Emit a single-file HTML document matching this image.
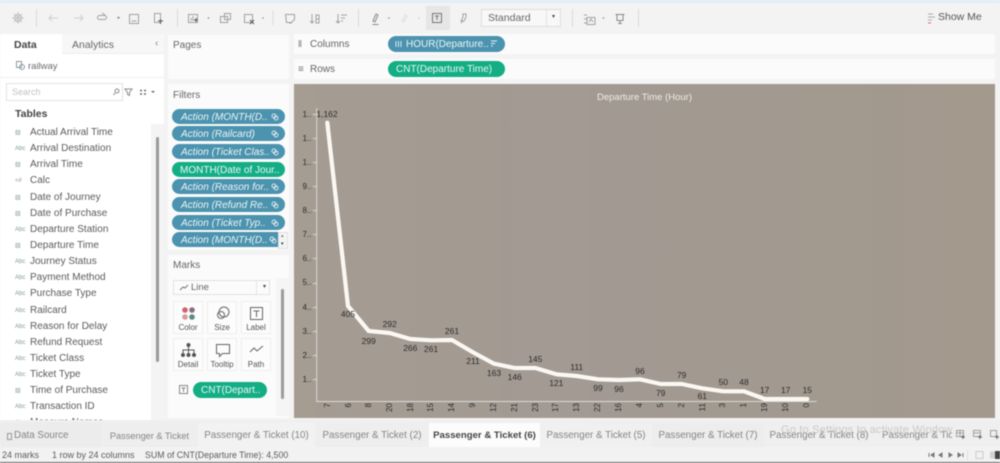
<!DOCTYPE html>
<html><head><meta charset="utf-8">
<style>
html,body{margin:0;padding:0;width:1000px;height:463px;overflow:hidden;background:#f3f3f3;font-family:"Liberation Sans",sans-serif;color:#555}
#w{position:relative;width:1000px;height:463px;overflow:hidden;filter:blur(.45px)}
.a{position:absolute;white-space:nowrap}
.p{position:absolute;background:#fbfbfb}
.pill{position:absolute;height:15px;line-height:17px;border-radius:8px;color:#eef5f8;font-size:10px;white-space:nowrap;overflow:hidden;background:#4b93ae;padding-left:9px;box-sizing:border-box}
.g{background:#13ae84}
.pill svg{position:absolute;right:6px;top:4px}
.f{position:absolute;left:30px;font-size:10px;color:#5b5b5b;white-space:nowrap;height:14px;line-height:16px}
.fi{position:absolute;left:15px;font-size:6px;color:#7f979f;line-height:16px;height:14px}
.t{position:absolute;top:423px;height:24px;line-height:26px;font-size:9.8px;color:#858585;white-space:nowrap;text-align:center;box-sizing:border-box}
.m{position:absolute;width:30px;height:33px;background:#fcfcfc;border:1px solid #eee;box-sizing:border-box;font-size:8px;color:#555;text-align:center;padding-top:21px}
.m svg{position:absolute;left:6px;top:3px}
svg.tb{position:absolute;left:0;top:0}
</style></head><body><div id="w">
<div class="a" style="left:0;top:0;width:1000px;height:3px;background:#e2eef7"></div>

<svg class="tb" width="1000" height="34" fill="none" stroke="#a2a2a2" stroke-width="1">
<g stroke="#dadada"><path d="M36.500 9V27M177.500 9V27M358.500 9V27M572.500 9V27M638.500 9V27M273 11V25"/></g>
<circle cx="18" cy="18" r="3.500" stroke="#b8aeae"/><path d="M18 12v12M12 18h12M14 14l8 8M22 14l-8 8" stroke="#cbc5c5"/>
<path d="M58 18H49M52 15l-3 3 3 3M74 18h9M80 15l3 3-3 3" stroke="#cfcfcf"/>
<rect x="97.500" y="15.500" width="9" height="4" rx="2"/><path d="M102 13l3 2" />
<path d="M117 17l1.500 2 1.500-2" fill="#777" stroke="none"/>
<rect x="129.500" y="14.500" width="9" height="9"/><path d="M131.500 21h5"/>
<rect x="154.500" y="13.500" width="6" height="9"/><path d="M158 21h5M160.500 19v5" stroke="#555"/>
<rect x="188.500" y="14.500" width="9" height="8"/><path d="M191 21v-3M193 21v-5" /><path d="M194 20h4M196 18v4" stroke="#555"/>
<path d="M207.500 17.500l1 1.500 1-1.500" fill="#777" stroke="none"/>
<rect x="220.500" y="16.500" width="7" height="6"/><rect x="224.500" y="13.500" width="6" height="6"/>
<rect x="244.500" y="14.500" width="8" height="8"/><path d="M250 20l4 4M254 20l-4 4" stroke="#555"/>
<path d="M262 17.500l1 1.500 1-1.500" fill="#777" stroke="none"/>
<path d="M285.500 14.500h9v5l-3 3h-5z"/><path d="M289 23h3"/>
<path d="M312 14v9M310 21l2 2 2-2M316 15h3v8h-3zM316 19h3"/>
<path d="M338 14v9M336 21l2 2 2-2M341 15h6M341 18h4M341 21h2"/>
<path d="M373 21l3-7 2 1-3 7zM372.500 24.500h6" stroke="#8a8a8a"/>
<path d="M388 17.500l1 1.500 1-1.500" fill="#777" stroke="none"/>
<path d="M402 21l3-6 2 1-3 6z" stroke="#dedede"/>
<path d="M418 17.500l1 1.500 1-1.500" fill="#bbb" stroke="none"/>
<path d="M461 21l2-4v-3h3v3l-2 4zM461 23l2-2"/>
<path d="M587 17.500h8v7h-8zM584 15h3M584 19h3M584 23h3M589 22l2-3 2 3"/>
<path d="M602.500 17.500l1 1.500 1-1.500" fill="#777" stroke="none"/>
<path d="M615.500 14.500h9M617 14.500v6h6v-6M620 20.500v3M618 23.500h4" stroke="#8a8a8a"/>
<path d="M928 14h5M928 17h7M928 20h4" stroke="#aaa"/><path d="M928 23h3" stroke="#e06080"/>
</svg>
<div class="a" style="left:426px;top:6px;width:24px;height:24px;background:#e6e6e6"></div>
<svg class="a" style="left:431px;top:11px" width="14" height="14" fill="none" stroke="#777"><rect x="1.500" y="2.500" width="9" height="9"/><path d="M4 5h4M6 5v4"/></svg>
<div class="a" style="left:481px;top:9px;width:80px;height:18px;background:#f8f8f8;border:1px solid #ddd;box-sizing:border-box;font-size:10.500px;line-height:17px;padding-left:6px;color:#666">Standard<span style="position:absolute;right:5px;top:-1px;font-size:6px;color:#444">▾</span><span style="position:absolute;right:13px;top:0;height:16px;width:1px;background:#e2e2e2"></span></div>
<div class="a" style="left:938px;top:11px;font-size:10.500px;color:#555">Show Me</div>

<!-- Data pane -->
<div class="p" style="left:0;top:34px;width:164px;height:389px;background:#fff"></div>
<div class="a" style="left:62px;top:34px;width:102px;height:20px;background:#f7f7f7;border-bottom:1px solid #eee;box-sizing:border-box"></div>
<div class="a" style="left:14px;top:39px;font-size:10.500px;font-weight:bold;color:#444">Data</div>
<div class="a" style="left:72px;top:39px;font-size:10.500px;color:#666">Analytics</div>
<div class="a" style="left:155px;top:38px;font-size:10px;color:#888">‹</div>
<svg class="a" style="left:15px;top:60px" width="11" height="11" fill="none" stroke="#8a9aa0"><rect x="1.500" y="1.500" width="5" height="6"/><circle cx="7" cy="7" r="2.500"/></svg>
<div class="a" style="left:28px;top:61px;font-size:9.500px;color:#6b6b6b">railway</div>
<div class="a" style="left:0;top:77px;width:164px;height:1px;background:#efefef"></div>
<div class="a" style="left:6px;top:83px;width:117px;height:18px;background:#fff;border:1px solid #e2e2e2;box-sizing:border-box;font-size:9px;line-height:16px;padding-left:5px;color:#c2c2c2">Search</div>
<svg class="a" style="left:112px;top:86px" width="50" height="12" fill="none" stroke="#8b8b8b"><circle cx="5" cy="5" r="2"/><path d="M3 7L1.500 9"/><path d="M13 3h7l-2.500 3.500v3l-2-1v-2z"/><path d="M28 4.500h2M32 4.500h2M28 8h2M32 8h2" stroke="#666" stroke-width="1.500"/><path d="M39 5l2 2 2-2" fill="#666" stroke="none"/></svg>
<div class="a" style="left:15px;top:108px;font-size:10.500px;font-weight:bold;color:#444">Tables</div>
<div class="a" style="left:151px;top:124px;width:13px;height:299px;background:#f4f4f4"></div>
<div class="a" style="left:156px;top:137px;width:3px;height:225px;background:#9a9a9a;border-radius:2px"></div>

<div class="fi" style="top:125px">▤</div><div class="f" style="top:125px">Actual Arrival Time</div>
<div class="fi" style="top:141px">Abc</div><div class="f" style="top:141px">Arrival Destination</div>
<div class="fi" style="top:157px">▤</div><div class="f" style="top:157px">Arrival Time</div>
<div class="fi" style="top:173px">=#</div><div class="f" style="top:173px">Calc</div>
<div class="fi" style="top:190px">▤</div><div class="f" style="top:190px">Date of Journey</div>
<div class="fi" style="top:206px">▤</div><div class="f" style="top:206px">Date of Purchase</div>
<div class="fi" style="top:222px">Abc</div><div class="f" style="top:222px">Departure Station</div>
<div class="fi" style="top:238px">▤</div><div class="f" style="top:238px">Departure Time</div>
<div class="fi" style="top:254px">Abc</div><div class="f" style="top:254px">Journey Status</div>
<div class="fi" style="top:270px">Abc</div><div class="f" style="top:270px">Payment Method</div>
<div class="fi" style="top:286px">Abc</div><div class="f" style="top:286px">Purchase Type</div>
<div class="fi" style="top:303px">Abc</div><div class="f" style="top:303px">Railcard</div>
<div class="fi" style="top:319px">Abc</div><div class="f" style="top:319px">Reason for Delay</div>
<div class="fi" style="top:335px">Abc</div><div class="f" style="top:335px">Refund Request</div>
<div class="fi" style="top:351px">Abc</div><div class="f" style="top:351px">Ticket Class</div>
<div class="fi" style="top:367px">Abc</div><div class="f" style="top:367px">Ticket Type</div>
<div class="fi" style="top:383px">▤</div><div class="f" style="top:383px">Time of Purchase</div>
<div class="fi" style="top:399px">Abc</div><div class="f" style="top:399px">Transaction ID</div>
<div class="fi" style="top:415px">Abc</div><div class="f" style="top:415px">Measure Names</div>

<!-- Pages -->
<div class="p" style="left:168px;top:35px;width:121px;height:44px"></div>
<div class="a" style="left:173px;top:40px;font-size:10px;color:#666">Pages</div>

<!-- Filters -->
<div class="p" style="left:168px;top:84px;width:121px;height:166px"></div>
<div class="a" style="left:173px;top:90px;font-size:10px;color:#666">Filters</div>
<div class="pill" style="left:172px;top:109px;width:113px"><i>Action (MONTH(D..</i><svg width="8" height="8" fill="none" stroke="#dbe9ef"><circle cx="3" cy="3" r="2"/><circle cx="5" cy="5" r="2"/></svg></div>
<div class="pill" style="left:172px;top:126px;width:113px"><i>Action (Railcard)</i><svg width="8" height="8" fill="none" stroke="#dbe9ef"><circle cx="3" cy="3" r="2"/><circle cx="5" cy="5" r="2"/></svg></div>
<div class="pill" style="left:172px;top:144px;width:113px"><i>Action (Ticket Clas..</i><svg width="8" height="8" fill="none" stroke="#dbe9ef"><circle cx="3" cy="3" r="2"/><circle cx="5" cy="5" r="2"/></svg></div>
<div class="pill g" style="left:172px;top:162px;width:113px;padding-left:8px">MONTH(Date of Jour..</div>
<div class="pill" style="left:172px;top:179px;width:113px"><i>Action (Reason for..</i><svg width="8" height="8" fill="none" stroke="#dbe9ef"><circle cx="3" cy="3" r="2"/><circle cx="5" cy="5" r="2"/></svg></div>
<div class="pill" style="left:172px;top:197px;width:113px"><i>Action (Refund Re..</i><svg width="8" height="8" fill="none" stroke="#dbe9ef"><circle cx="3" cy="3" r="2"/><circle cx="5" cy="5" r="2"/></svg></div>
<div class="pill" style="left:172px;top:215px;width:113px"><i>Action (Ticket Typ..</i><svg width="8" height="8" fill="none" stroke="#dbe9ef"><circle cx="3" cy="3" r="2"/><circle cx="5" cy="5" r="2"/></svg></div>
<div class="pill" style="left:172px;top:232px;width:106px;border-radius:8px 0 0 8px"><i>Action (MONTH(D..</i><svg style="right:1px" width="8" height="8" fill="none" stroke="#dbe9ef"><circle cx="3" cy="3" r="2"/><circle cx="5" cy="5" r="2"/></svg></div>
<div class="a" style="left:278px;top:232px;width:10px;height:17px;background:#f4f4f4;border:1px solid #e0e0e0;box-sizing:border-box"></div>
<div class="a" style="left:281px;top:233px;font-size:5px;color:#777">▴</div>
<div class="a" style="left:281px;top:241px;font-size:5px;color:#333">▾</div>

<!-- Marks -->
<div class="p" style="left:168px;top:255px;width:121px;height:163px"></div>
<div class="a" style="left:173px;top:260px;font-size:10px;color:#666">Marks</div>
<div class="a" style="left:173px;top:280px;width:97px;height:15px;background:#fbfbfb;border:1px solid #e2e2e2;box-sizing:border-box;font-size:9.500px;line-height:13px;padding-left:17px;color:#666">Line<span style="position:absolute;right:3px;top:0;font-size:6px;color:#444">▾</span><span style="position:absolute;right:12px;top:0;width:1px;height:13px;background:#e6e6e6"></span></div>
<svg class="a" style="left:179px;top:284px" width="10" height="8" fill="none" stroke="#777"><path d="M1 6l3-3 2 1 3-3"/></svg>
<div class="a" style="left:276px;top:278px;width:13px;height:138px;background:#f5f5f5"></div>
<div class="a" style="left:281px;top:289px;width:3px;height:110px;background:#9c9c9c;border-radius:2px"></div>

<div class="m" style="left:173px;top:301px">Color<svg width="18" height="18"><circle cx="5" cy="5" r="2.800" fill="#c9666d"/><circle cx="12" cy="5" r="2.800" fill="#8a6e80"/><circle cx="5" cy="12" r="2.800" fill="#d99a9a"/><circle cx="12" cy="12" r="2.800" fill="#5f8a84"/></svg></div>
<div class="m" style="left:207px;top:301px">Size<svg width="18" height="18" fill="none" stroke="#666"><circle cx="10" cy="7" r="5"/><circle cx="7" cy="10" r="3.500"/></svg></div>
<div class="m" style="left:241px;top:301px">Label<svg width="18" height="18" fill="none" stroke="#666"><rect x="2.500" y="2.500" width="12" height="12"/><path d="M5.500 6h6M8.500 6v6"/></svg></div>
<div class="m" style="left:173px;top:338px">Detail<svg width="18" height="18" fill="none" stroke="#555"><circle cx="8.500" cy="3" r="1.500" fill="#555"/><path d="M8.500 4v7M3 11V8h11v3"/><circle cx="3" cy="13" r="1.500" fill="#555"/><circle cx="8.500" cy="13" r="1.500" fill="#555"/><circle cx="14" cy="13" r="1.500" fill="#555"/></svg></div>
<div class="m" style="left:207px;top:338px">Tooltip<svg width="18" height="18" fill="none" stroke="#666"><path d="M2.500 2.500h13v9h-7l-3 3v-3h-3z"/></svg></div>
<div class="m" style="left:241px;top:338px">Path<svg width="18" height="18" fill="none" stroke="#666"><path d="M2 10l4-4 3 3 6-5"/></svg></div>
<svg class="a" style="left:179px;top:385px" width="10" height="10" fill="none" stroke="#888"><rect x=".5" y=".5" width="8" height="8"/><path d="M2.500 3h4M4.500 3v4"/></svg>
<div class="pill g" style="left:193px;top:382px;width:74px;height:16px;line-height:17px;font-size:10px;padding-left:8px">CNT(Depart..</div>

<!-- Shelves -->
<div class="p" style="left:294px;top:34px;width:701px;height:20px"></div>
<div class="p" style="left:294px;top:59px;width:701px;height:20px"></div>
<div class="a" style="left:298px;top:39px;font-size:9px;color:#777">⦀</div>
<div class="a" style="left:310px;top:39px;font-size:10px;color:#666">Columns</div>
<div class="a" style="left:298px;top:64px;font-size:10px;color:#777">≡</div>
<div class="a" style="left:310px;top:64px;font-size:10px;color:#666">Rows</div>
<div class="pill" style="left:388px;top:36px;width:117px;height:16px;line-height:17px;font-size:10px;padding-left:18px">HOUR(Departure..</div>
<svg class="a" style="left:395px;top:41px" width="8" height="7" fill="none" stroke="#dbe9ef"><path d="M1 0v6M3.500 0v6M6 0v6"/></svg>
<svg class="a" style="left:490px;top:40px" width="9" height="8" fill="none" stroke="#e5eff3"><path d="M1 1h6M1 3.500h4M1 6h2"/></svg>
<div class="pill g" style="left:388px;top:61px;width:117px;height:16px;line-height:17px;font-size:10px;padding-left:8px">CNT(Departure Time)</div>

<!-- Chart -->
<div class="a" style="left:294px;top:84px;width:701px;height:334px;background:#a39a8f"></div>
<svg class="a" style="left:0;top:0" width="1000" height="463" font-family="Liberation Sans, sans-serif" font-size="8.500" fill="#2c2c2c">
<linearGradient id="bg" x1="0" x2="1" y1="0" y2="0"><stop offset="0" stop-color="#a59c92"/><stop offset=".4" stop-color="#a29a93"/><stop offset="1" stop-color="#a3998d"/></linearGradient>
<rect x="294" y="84" width="701" height="334" fill="url(#bg)"/>
<text x="644.500" y="100" text-anchor="middle" fill="#efebe5" font-size="9.500">Departure Time (Hour)</text>
<path d="M316.700 108V401.500H816.700" fill="none" stroke="#dcd9d3" stroke-width="1"/>
<path d="M313 114.500h3.500M313 138.500h3.500M313 162.500h3.500M313 186.500h3.500M313 210.500h3.500M313 234.500h3.500M313 258.500h3.500M313 283.500h3.500M313 307.500h3.500M313 331.500h3.500M313 355.500h3.500M313 379.500h3.500" stroke="#dcd9d3" fill="none"/>
<g font-size="8" text-anchor="middle">
<text x="307" y="117">1..</text><text x="307" y="141">1..</text><text x="307" y="165">1..</text><text x="307" y="189">9..</text><text x="307" y="213">8..</text><text x="307" y="237">7..</text><text x="307" y="261">6..</text><text x="307" y="285">5..</text><text x="307" y="310">4..</text><text x="307" y="334">3..</text><text x="307" y="358">2..</text><text x="307" y="382">1..</text>
</g>
<polyline fill="none" stroke="#fbf8f3" stroke-width="4.200" stroke-linejoin="round" stroke-linecap="round" points="327.300,122.700 348,306 368.700,331 389.700,333 410.300,339 431,340.300 452,340 473,352.300 494,363.700 514.700,368 535.300,368 556.300,374.300 576.700,376 598,379.300 619,380 640,379.300 660.700,384 681.700,384 702.300,388.300 723.300,391.300 744,391.300 764.700,399 785.700,399 807.300,399"/>
<g text-anchor="middle">
<text x="327" y="117">1,162</text><text x="348" y="317">405</text><text x="368.700" y="344">299</text><text x="389.700" y="327">292</text><text x="410.300" y="351">266</text><text x="431" y="352">261</text><text x="452" y="334">261</text><text x="473" y="364">211</text><text x="494" y="376">163</text><text x="514.700" y="380">146</text><text x="535.300" y="362">145</text><text x="556.300" y="386">121</text>
<text x="576.700" y="370">111</text><text x="598" y="391">99</text><text x="619" y="392">96</text><text x="640" y="374">96</text><text x="660.700" y="396">79</text><text x="681.700" y="378">79</text><text x="702.300" y="399">61</text><text x="723.300" y="385">50</text><text x="744" y="385">48</text><text x="764.700" y="393">17</text><text x="785.700" y="393">17</text><text x="807.300" y="393">15</text>
</g>
<g font-size="8">
<text transform="translate(330,403) rotate(-90)" text-anchor="end">7</text><text transform="translate(351,403) rotate(-90)" text-anchor="end">6</text><text transform="translate(371,403) rotate(-90)" text-anchor="end">8</text><text transform="translate(392,403) rotate(-90)" text-anchor="end">20</text><text transform="translate(413,403) rotate(-90)" text-anchor="end">18</text><text transform="translate(433,403) rotate(-90)" text-anchor="end">15</text><text transform="translate(454,403) rotate(-90)" text-anchor="end">14</text><text transform="translate(475,403) rotate(-90)" text-anchor="end">9</text><text transform="translate(496,403) rotate(-90)" text-anchor="end">12</text><text transform="translate(517,403) rotate(-90)" text-anchor="end">21</text><text transform="translate(538,403) rotate(-90)" text-anchor="end">23</text><text transform="translate(558,403) rotate(-90)" text-anchor="end">17</text><text transform="translate(579,403) rotate(-90)" text-anchor="end">13</text><text transform="translate(600,403) rotate(-90)" text-anchor="end">22</text><text transform="translate(621,403) rotate(-90)" text-anchor="end">16</text><text transform="translate(642,403) rotate(-90)" text-anchor="end">4</text><text transform="translate(663,403) rotate(-90)" text-anchor="end">5</text><text transform="translate(684,403) rotate(-90)" text-anchor="end">2</text><text transform="translate(705,403) rotate(-90)" text-anchor="end">11</text><text transform="translate(725,403) rotate(-90)" text-anchor="end">3</text><text transform="translate(746,403) rotate(-90)" text-anchor="end">1</text><text transform="translate(767,403) rotate(-90)" text-anchor="end">19</text><text transform="translate(788,403) rotate(-90)" text-anchor="end">10</text><text transform="translate(809,403) rotate(-90)" text-anchor="end">0</text>
</g>
</svg>

<!-- Tabs -->
<div class="a" style="left:0;top:420px;width:1000px;height:27px;background:#efefef"></div>
<div class="t" style="left:0;width:101px;padding-left:14px;text-align:left;background:#ececec;font-size:9.800px"><span style="position:absolute;left:7px;top:10px;width:3px;height:5px;border:1px solid #999"></span>Data Source</div>
<div class="t" style="left:101px;width:97px;background:#eeeeee;font-size:9.200px">Passenger &amp; Ticket</div>
<div class="t" style="left:198px;width:117px;background:#f2f2f2">Passenger &amp; Ticket (10)</div>
<div class="t" style="left:315px;width:114px;background:#eeeeee">Passenger &amp; Ticket (2)</div>
<div class="t" style="left:429px;width:111px;background:#fcfcfc;color:#444;font-weight:bold;font-size:9.600px;top:423px">Passenger &amp; Ticket (6)</div>
<div class="t" style="left:540px;width:112px;background:#f0f0f0">Passenger &amp; Ticket (5)</div>
<div class="t" style="left:652px;width:112px;background:#ededed">Passenger &amp; Ticket (7)</div>
<div class="t" style="left:764px;width:110px;background:#efefef">Passenger &amp; Ticket (8)</div>
<div class="t" style="left:874px;width:78px;overflow:hidden;text-align:left;padding-left:8px;background:#efefef">Passenger &amp; Ticket</div>
<div class="a" style="left:781px;top:424px;font-size:11px;color:#c9c9c9;letter-spacing:.2px">Go to Settings to activate Windows.</div>
<div class="a" style="left:953px;top:421px;width:47px;height:26px;background:#efefef"></div>
<svg class="a" style="left:955px;top:428px" width="45" height="12" fill="none" stroke="#a0a0a0"><path d="M1.500 2.500h7v6h-7zM1.500 5h7M5 2.500v6"/><path d="M6 9h4M8 7v4" stroke="#666"/><path d="M18.500 2.500h7v6h-7zM18.500 5h7"/><path d="M23 9h4M25 7v4" stroke="#666"/><path d="M35.500 2.500h6v6h-6z"/><path d="M40 9h4M42 7v4" stroke="#666"/></svg>

<!-- Status -->
<div class="a" style="left:0;top:447px;width:1000px;height:15px;background:#f2f2f2"></div>
<div class="a" style="left:0;top:462px;width:1000px;height:1px;background:#666"></div>
<div class="a" style="left:2px;top:450px;font-size:9px;color:#5c5c5c">24 marks</div>
<div class="a" style="left:52px;top:450px;font-size:9px;color:#5c5c5c">1 row by 24 columns</div>
<div class="a" style="left:145px;top:450px;font-size:8.800px;color:#5c5c5c">SUM of CNT(Departure Time): 4,500</div>
<svg class="a" style="left:925px;top:449px" width="75" height="12" fill="none"><path d="M4 4v4M9 4L6 6l3 2zM14 6l3-2v4zM24 4l3 2-3 2zM33 4l3 2-3 2zM38 4v4" stroke="#777" fill="#777"/><path d="M42.500 1v10" stroke="#ddd"/><rect x="51" y="2.500" width="7" height="7" stroke="#ccc"/><rect x="65" y="2.500" width="7" height="7" fill="#d2d2d2"/><rect x="70" y="2" width="5" height="8" fill="#444"/></svg>
</div></body></html>
